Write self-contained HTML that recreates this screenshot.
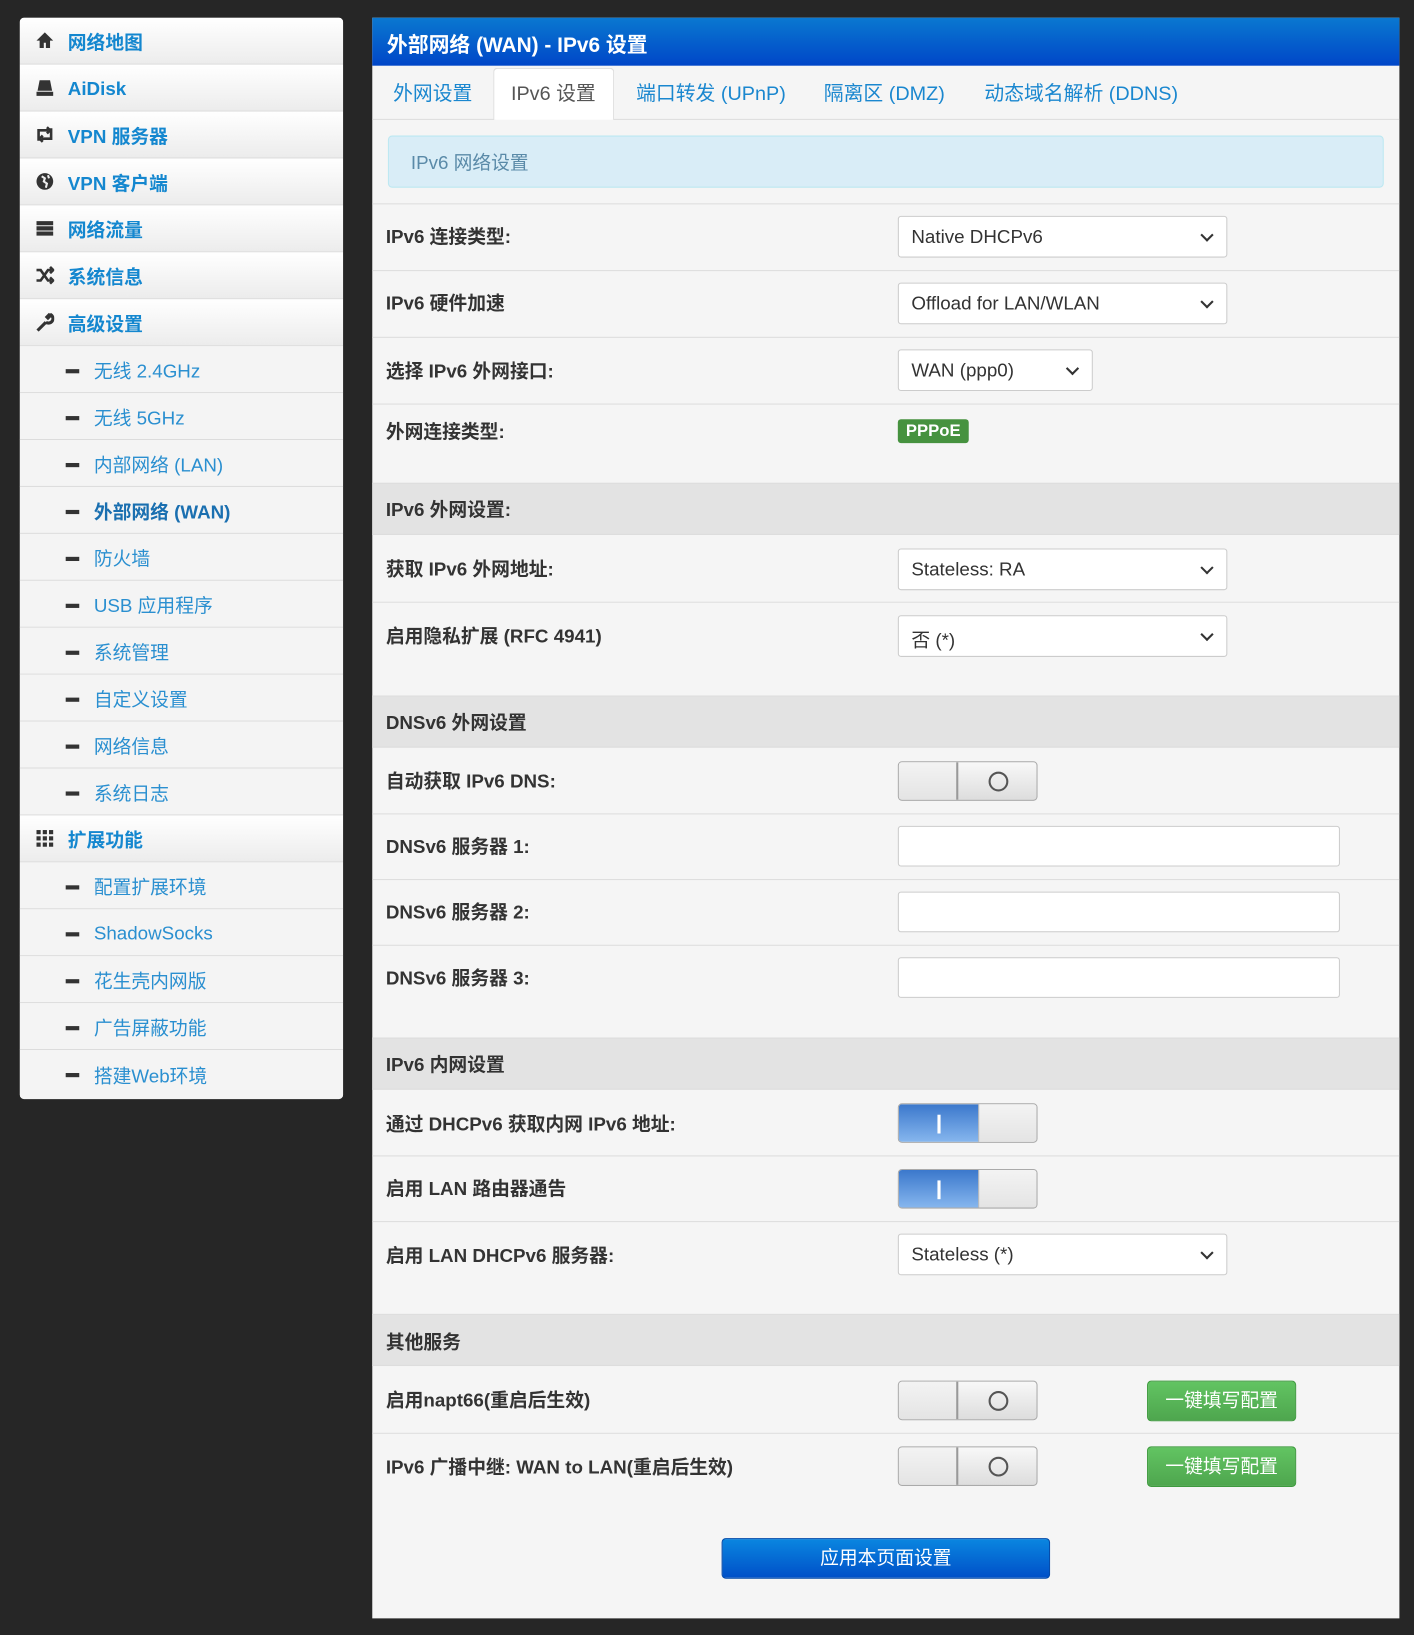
<!DOCTYPE html>
<html><head><meta charset="utf-8"><style>
*{box-sizing:border-box;margin:0;padding:0}
html,body{width:1414px;height:1635px;overflow:hidden;background:#262626}
#w{position:absolute;left:0;top:0;width:1356px;height:1568px;transform:scale(1.04277);transform-origin:0 0;font-family:"Liberation Sans","Noto Sans CJK SC",sans-serif}
.a{position:absolute}
#side{left:19px;top:17px;width:310px;height:1037px;background:#f4f4f4;border-radius:4px;overflow:hidden}
.it{height:45px;border-bottom:1px solid #dcdcdc;display:flex;align-items:center;color:#1487cf;font-size:18px;position:relative;padding-top:2px}
.top{background:linear-gradient(#fff,#ececec);font-weight:bold;padding-left:46px}
.sub{background:#f4f4f4;padding-left:71px;color:#2a8fd0}
.sub:before{content:"";position:absolute;left:44px;top:22px;width:13px;height:4px;background:#333}
.sub.on{font-weight:bold;color:#1a6fb0}
.ic{position:absolute;left:15px;top:13px;width:18px;height:18px}
#main{left:357px;top:17px;width:985px;height:1535px;background:#f5f5f5}
#hd{left:0;top:0;width:985px;height:46px;background:linear-gradient(#0a78d0,#0046c8);color:#fff;font-weight:bold;font-size:20px;padding:10px 14px}
.tab{top:58px;font-size:19px;color:#1a87cf}
.lbl{left:13px;font-weight:bold;font-size:18px;color:#333;margin-top:-3px}
.ln{left:0;width:985px;height:1px;background:#ddd}
.sec{left:0;width:985px;height:50px;background:#e3e3e3;border-top:1px solid #ddd;border-bottom:1px solid #ddd}
.sel{left:504px;width:316px;height:40px;background:#fff;border:1px solid #ccc;border-radius:3px;font-size:18px;color:#333;padding:9px 12px 7px}
.sel:after{content:"";position:absolute;right:14px;top:13px;width:7px;height:7px;border-right:2px solid #333;border-bottom:2px solid #333;transform:rotate(45deg)}
.inp{left:504px;width:424px;height:39px;background:#fff;border:1px solid #ccc;border-radius:3px}
.tg{left:504px;width:134px;height:38px;border:1px solid #aaa;border-radius:4px;overflow:hidden;background:linear-gradient(#f8f8f8,#ddd)}
.tg .k{position:absolute;left:0;top:0;width:57px;height:36px;background:linear-gradient(#f3f3f3,#e4e4e4);border-right:2px solid #999}
.tg .o{position:absolute;left:86px;top:9px;width:19px;height:19px;border:2px solid #555;border-radius:50%}
.tg.on .k{left:auto;right:0;border-right:0;border-left:1px solid #bbb;width:56px}
.tg.on .b{position:absolute;left:0;top:0;width:77px;height:36px;background:linear-gradient(#3b78cc,#86b6ee)}
.tg.on .b:after{content:"";position:absolute;left:37px;top:10px;width:3px;height:18px;background:#fff}
.gb{left:743px;width:143px;height:39px;background:linear-gradient(#62c462,#4ea64e);border:1px solid #3e9a3e;border-radius:4px;color:#fff;font-size:18px;text-align:center;line-height:37px}
</style></head><body><div id="w">
<div id="side" class="a">
<div class="it top"><svg class="ic" viewBox="0 0 18 18"><path d="M9 1L1 9h3v7h4v-5h2v5h4V9h3z" fill="#333"/></svg>网络地图</div>
<div class="it top"><svg class="ic" viewBox="0 0 18 18"><path d="M4 2h10l2 10H2z M1 13h16v4H1z" fill="#333"/></svg>AiDisk</div>
<div class="it top"><svg class="ic" viewBox="0 0 18 18"><path d="M3 15V5h9M11 2l3 3-3 3M15 3v10H6M7 16l-3-3 3-3" stroke="#333" stroke-width="2.5" fill="none"/></svg>VPN 服务器</div>
<div class="it top"><svg class="ic" viewBox="0 0 18 18"><circle cx="9" cy="9" r="8" fill="#333"/><path d="M6 4l3 2-1 3 3 2-1 4M12 3l1 3" stroke="#eee" stroke-width="2" fill="none"/></svg>VPN 客户端</div>
<div class="it top"><svg class="ic" viewBox="0 0 18 18"><path d="M1 2h16v4H1zM1 7h16v4H1zM1 12h16v4H1z" fill="#333"/></svg>网络流量</div>
<div class="it top"><svg class="ic" viewBox="0 0 18 18"><path d="M1 4h4l7 10h3M1 14h4l7-10h3M14 1l3 3-3 3M14 11l3 3-3 3" stroke="#333" stroke-width="2.5" fill="none"/></svg>系统信息</div>
<div class="it top"><svg class="ic" viewBox="0 0 18 18"><path d="M2 17l8-8M10 9a4 4 0 1 0 5-7l-3 3-1-1 3-3" stroke="#333" stroke-width="3" fill="none"/></svg>高级设置</div>
<div class="it sub">无线 2.4GHz</div>
<div class="it sub">无线 5GHz</div>
<div class="it sub">内部网络 (LAN)</div>
<div class="it sub on">外部网络 (WAN)</div>
<div class="it sub">防火墙</div>
<div class="it sub">USB 应用程序</div>
<div class="it sub">系统管理</div>
<div class="it sub">自定义设置</div>
<div class="it sub">网络信息</div>
<div class="it sub">系统日志</div>
<div class="it top"><svg class="ic" viewBox="0 0 18 18" fill="#333"><rect x="1" y="1" width="4" height="4"/><rect x="7" y="1" width="4" height="4"/><rect x="13" y="1" width="4" height="4"/><rect x="1" y="7" width="4" height="4"/><rect x="7" y="7" width="4" height="4"/><rect x="13" y="7" width="4" height="4"/><rect x="1" y="13" width="4" height="4"/><rect x="7" y="13" width="4" height="4"/><rect x="13" y="13" width="4" height="4"/></svg>扩展功能</div>
<div class="it sub">配置扩展环境</div>
<div class="it sub">ShadowSocks</div>
<div class="it sub">花生壳内网版</div>
<div class="it sub">广告屏蔽功能</div>
<div class="it sub" style="border-bottom:0">搭建Web环境</div>
</div>
<div id="main" class="a">
<div id="hd" class="a">外部网络 (WAN) - IPv6 设置</div>
<div class="a" style="left:0;top:97px;width:985px;height:1px;background:#ddd"></div>
<div class="a" style="left:116px;top:48px;width:116px;height:50px;background:#fff;border:1px solid #ddd;border-bottom:0;border-radius:4px 4px 0 0"></div>
<div class="a tab" style="left:20px">外网设置</div>
<div class="a tab" style="left:133px;color:#555">IPv6 设置</div>
<div class="a tab" style="left:253px">端口转发 (UPnP)</div>
<div class="a tab" style="left:433px">隔离区 (DMZ)</div>
<div class="a tab" style="left:587px">动态域名解析 (DDNS)</div>
<div class="a" style="left:15px;top:113px;width:955px;height:50px;background:#d9edf7;border:1px solid #bce8f1;border-radius:4px;color:#5a8aa8;font-size:18px;padding:11px 21px">IPv6 网络设置</div>
<div class="a ln" style="top:178px"></div>
<div class="a lbl" style="top:199px">IPv6 连接类型:</div>
<div class="a sel" style="top:190px">Native DHCPv6</div>
<div class="a ln" style="top:242px"></div>
<div class="a lbl" style="top:263px">IPv6 硬件加速</div>
<div class="a sel" style="top:254px">Offload for LAN/WLAN</div>
<div class="a ln" style="top:306px"></div>
<div class="a lbl" style="top:328px">选择 IPv6 外网接口:</div>
<div class="a sel" style="top:318px;width:187px">WAN (ppp0)</div>
<div class="a ln" style="top:370px"></div>
<div class="a lbl" style="top:386px">外网连接类型:</div>
<div class="a" style="left:504px;top:385px;width:68px;height:23px;background:#46923f;border-radius:3px;color:#fff;font-weight:bold;font-size:16px;text-align:center;line-height:23px">PPPoE</div>
<div class="a sec" style="top:446px"></div>
<div class="a lbl" style="top:461px">IPv6 外网设置:</div>
<div class="a lbl" style="top:518px">获取 IPv6 外网地址:</div>
<div class="a sel" style="top:509px">Stateless: RA</div>
<div class="a ln" style="top:560px"></div>
<div class="a lbl" style="top:582px">启用隐私扩展 (RFC 4941)</div>
<div class="a sel" style="top:573px">否 (*)</div>
<div class="a sec" style="top:650px"></div>
<div class="a lbl" style="top:665px">DNSv6 外网设置</div>
<div class="a lbl" style="top:721px">自动获取 IPv6 DNS:</div>
<div class="a tg" style="top:713px"><div class="k"></div><div class="o"></div></div>
<div class="a ln" style="top:763px"></div>
<div class="a lbl" style="top:784px">DNSv6 服务器 1:</div>
<div class="a inp" style="top:775px"></div>
<div class="a ln" style="top:826px"></div>
<div class="a lbl" style="top:847px">DNSv6 服务器 2:</div>
<div class="a inp" style="top:838px"></div>
<div class="a ln" style="top:889px"></div>
<div class="a lbl" style="top:910px">DNSv6 服务器 3:</div>
<div class="a inp" style="top:901px"></div>
<div class="a sec" style="top:978px"></div>
<div class="a lbl" style="top:993px">IPv6 内网设置</div>
<div class="a lbl" style="top:1050px">通过 DHCPv6 获取内网 IPv6 地址:</div>
<div class="a tg on" style="top:1041px"><div class="b"></div><div class="k"></div></div>
<div class="a ln" style="top:1091px"></div>
<div class="a lbl" style="top:1112px">启用 LAN 路由器通告</div>
<div class="a tg on" style="top:1104px"><div class="b"></div><div class="k"></div></div>
<div class="a ln" style="top:1154px"></div>
<div class="a lbl" style="top:1176px">启用 LAN DHCPv6 服务器:</div>
<div class="a sel" style="top:1166px">Stateless (*)</div>
<div class="a sec" style="top:1243px"></div>
<div class="a lbl" style="top:1259px">其他服务</div>
<div class="a lbl" style="top:1315px">启用napt66(重启后生效)</div>
<div class="a tg" style="top:1307px"><div class="k"></div><div class="o"></div></div>
<div class="a gb" style="top:1307px">一键填写配置</div>
<div class="a ln" style="top:1357px"></div>
<div class="a lbl" style="top:1379px">IPv6 广播中继: WAN to LAN(重启后生效)</div>
<div class="a tg" style="top:1370px"><div class="k"></div><div class="o"></div></div>
<div class="a gb" style="top:1370px">一键填写配置</div>
<div class="a" style="left:335px;top:1458px;width:315px;height:39px;background:linear-gradient(#0a86e0,#0050c8);border:1px solid #0048a8;border-radius:4px;color:#fff;font-size:18px;text-align:center;line-height:37px">应用本页面设置</div>
</div>
</div></body></html>
